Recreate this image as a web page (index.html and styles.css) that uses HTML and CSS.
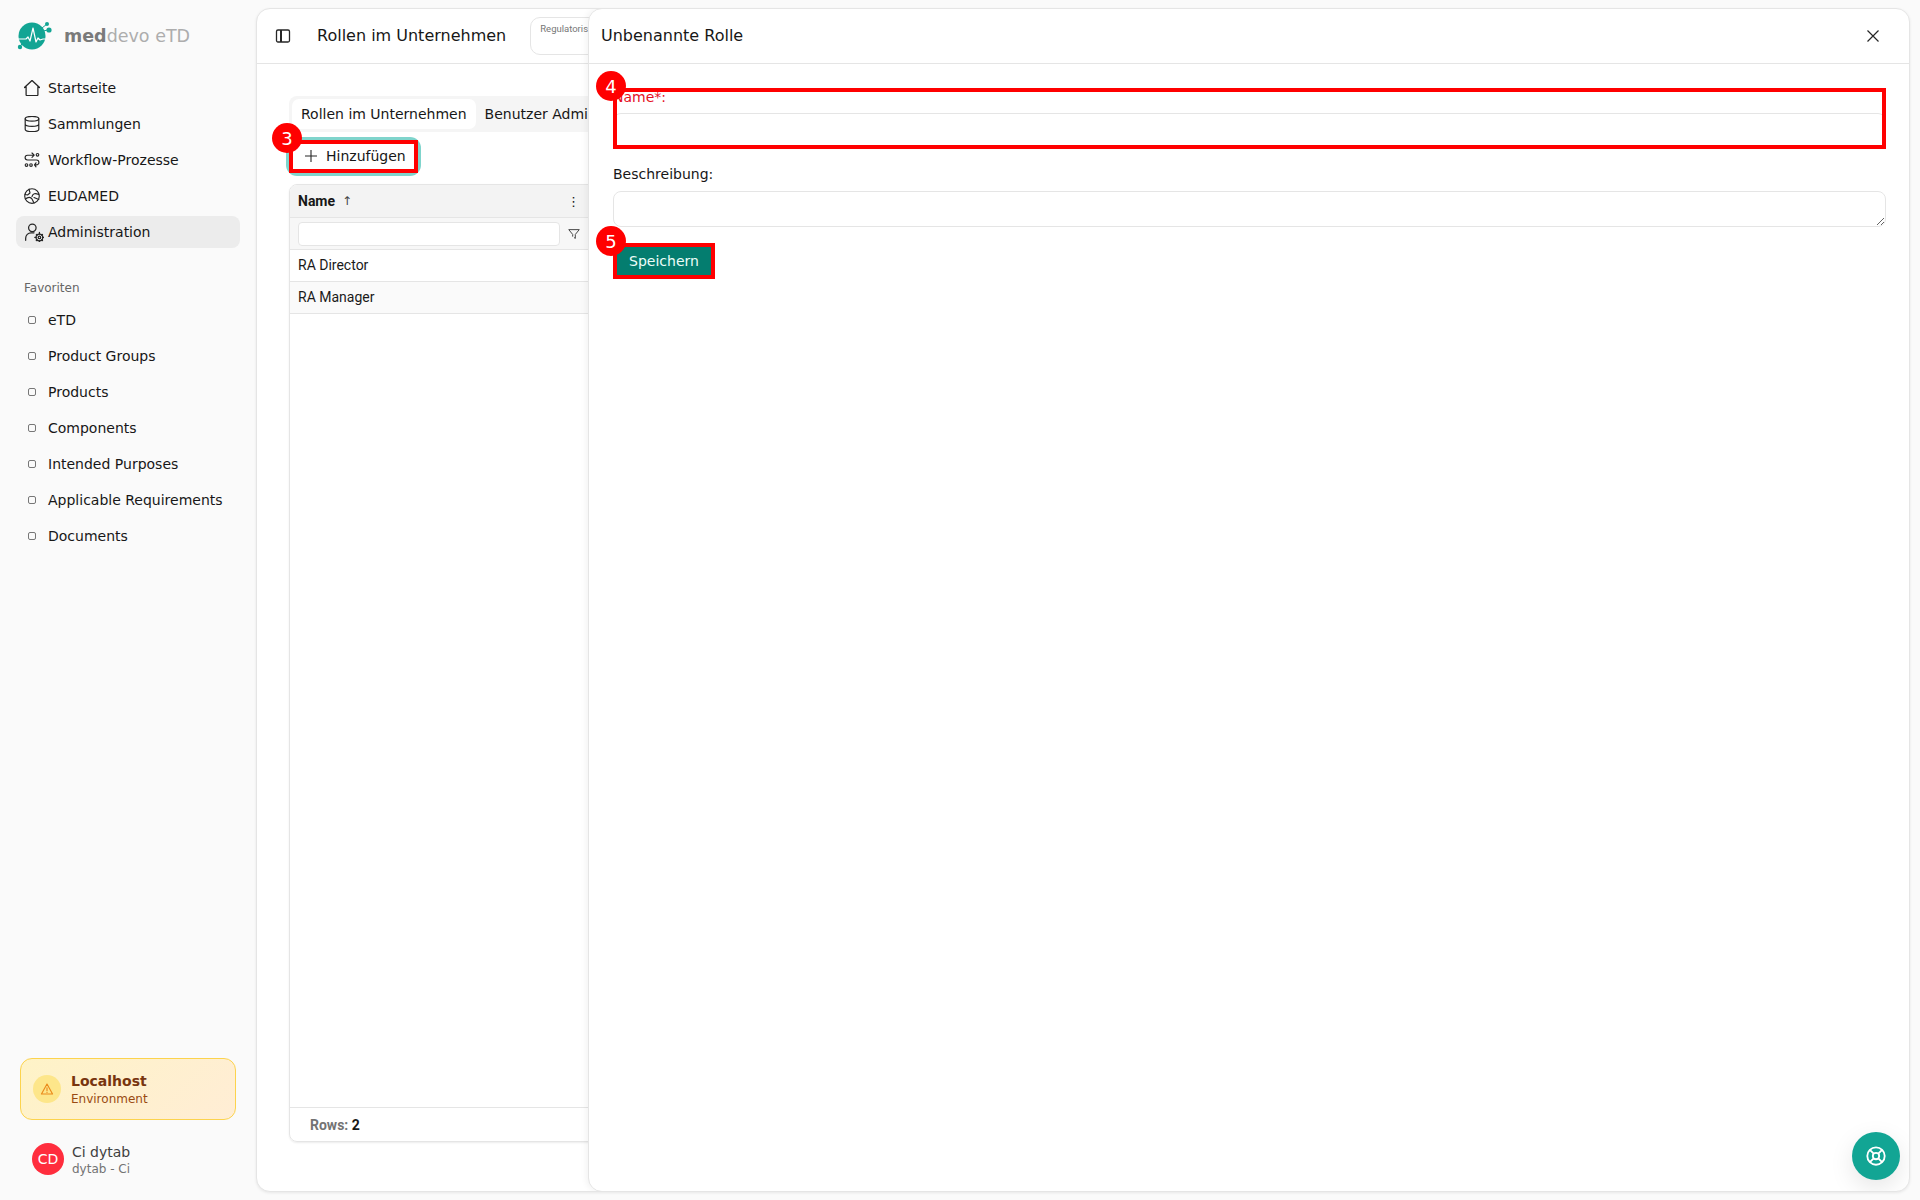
FILE: index.html
```html
<!DOCTYPE html>
<html lang="de">
<head>
    <meta charset="UTF-8">
    <meta name="viewport" content="width=device-width, initial-scale=1.0">
    <title>Rollen im Unternehmen</title>
    <link rel="stylesheet" href="styles.css">
</head>
<body>
    <aside class="sidebar">
        <div class="brand">
            <svg class="brand-logo" viewBox="0 0 36 36" fill="none">
                <circle cx="16" cy="18" r="13.5" fill="#12a594"/>
                <path d="M26 10l5-4M27 13l5-1M6 26l-3 3" stroke="#12a594" stroke-width="1"/>
                <circle cx="31" cy="6" r="2" fill="#12a594"/>
                <circle cx="33" cy="12" r="2.6" fill="#12a594"/>
                <circle cx="4" cy="29" r="2.2" fill="#12a594"/>
                <path d="M1 21h9l2-2 2 4 3-13 3 14 2-4 2 2 3-1h3" stroke="#fff" stroke-width="1.2" stroke-linejoin="round"/>
            </svg>
            <span class="brand-name"><b>med</b>devo eTD</span>
        </div>

        <nav class="nav">
            <a class="nav-item">
                <svg class="nav-icon" viewBox="2.500 2.500 19 19"><path d="M3 11.500 12 3l9 8.500M5 9.500V20a1 1 0 0 0 1 1h12a1 1 0 0 0 1-1V9.500"/></svg>
                Startseite
            </a>
            <a class="nav-item">
                <svg class="nav-icon" viewBox="2 2 20 20"><ellipse cx="12" cy="5.500" rx="8.500" ry="3"/><path d="M3.500 5.500v13c0 1.700 3.800 3 8.500 3s8.500-1.300 8.500-3v-13M3.500 12c0 1.700 3.800 3 8.500 3s8.500-1.300 8.500-3"/></svg>
                Sammlungen
            </a>
            <a class="nav-item">
                <svg class="nav-icon nav-icon-thin" viewBox="0 0 16 16"><circle cx="13.500" cy="2.800" r="1.300"/><path d="M8 1l2.200 2.200L8 5.400M10 3.200H3.500a2.400 2.400 0 0 0 0 4.800h9a2.400 2.400 0 0 1 0 4.800H10.500M12 10.800l-1.500 2 1.500 2"/><circle cx="2.500" cy="13" r="1.300"/><circle cx="7" cy="13" r="1.300"/></svg>
                Workflow-Prozesse
            </a>
            <a class="nav-item">
                <svg class="nav-icon nav-icon-thin" viewBox="0 0 16 16"><circle cx="8" cy="8" r="7.300"/><path d="M5 1.200 6 5 3.500 7 1 6.500M8 8.500C9 5.500 11 5 14.800 6.500M1.500 11C4 8.500 7 9 8 11l2 4M10 9.500l4.800 2"/></svg>
                EUDAMED
            </a>
            <a class="nav-item is-active">
                <svg class="nav-icon nav-icon-wide" viewBox="0 0 24 24"><circle cx="10" cy="7" r="4.500"/><path d="M2 22v-2.500A6.500 6.500 0 0 1 8.500 13H12"/><circle cx="18.500" cy="18.500" r="1.500"/><circle cx="18.500" cy="18.500" r="4"/><path d="M18.500 12.500v2M18.500 22.500v1.500M13 18.500h1.500M22.500 18.500H24M14.800 14.800l1 1M21.200 21.200l1 1M14.800 22.200l1-1M21.200 15.800l1-1"/></svg>
                Administration
            </a>
        </nav>

        <div class="fav-title">Favoriten</div>
        <nav class="nav">
            <a class="nav-item"><i class="fav-dot"></i>eTD</a>
            <a class="nav-item"><i class="fav-dot"></i>Product Groups</a>
            <a class="nav-item"><i class="fav-dot"></i>Products</a>
            <a class="nav-item"><i class="fav-dot"></i>Components</a>
            <a class="nav-item"><i class="fav-dot"></i>Intended Purposes</a>
            <a class="nav-item"><i class="fav-dot"></i>Applicable Requirements</a>
            <a class="nav-item"><i class="fav-dot"></i>Documents</a>
        </nav>

        <div class="env-card">
            <span class="env-icon">
                <svg viewBox="0 0 24 24" fill="none" stroke="#ea8a1a" stroke-width="2" stroke-linejoin="round" stroke-linecap="round"><path d="M12 3.500 2.500 20.500h19zM12 10v5M12 17.800v.2"/></svg>
            </span>
            <div>
                <div class="env-name">Localhost</div>
                <div class="env-sub">Environment</div>
            </div>
        </div>

        <div class="user">
            <span class="avatar">CD</span>
            <div>
                <div class="user-name">Ci dytab</div>
                <div class="user-sub">dytab - Ci</div>
            </div>
        </div>
    </aside>

    <main class="panel">
        <header class="topbar">
            <svg class="toggle-icon" viewBox="0 0 16 16"><rect x="1.500" y="2" width="13" height="12" rx="1.500"/><path d="M6 2v12" stroke-width="2"/></svg>
            <h1 class="page-title">Rollen im Unternehmen</h1>
            <div class="crumb-box">Regulatoris</div>
        </header>

        <div class="content">
            <div class="tabs">
                <button class="tab is-active">Rollen im Unternehmen</button>
                <button class="tab">Benutzer Administration</button>
            </div>

            <div class="toolbar">
                <button class="add-btn">
                    <svg viewBox="0 0 16 16"><path d="M8 2v12M2 8h12"/></svg>
                    Hinzufügen
                    <span class="mark"></span>
                    <span class="mark-num">3</span>
                </button>
            </div>

            <div class="grid">
                <div class="grid-head">
                    <span class="grid-col">Name <span class="sort-arrow">↑</span></span>
                    <span class="kebab">⋮</span>
                </div>
                <div class="grid-filter">
                    <input class="filter-input" type="text">
                    <svg class="filter-icon" viewBox="0 0 16 16"><path d="M2 3h12L9.500 8.500V13L8 12"/><path d="M2 3l4.500 5.500V11"/></svg>
                </div>
                <div class="grid-row">RA Director</div>
                <div class="grid-row is-odd">RA Manager</div>
                <div class="grid-spacer"></div>
                <div class="grid-foot"><span class="rows-label">Rows:</span> <b>2</b></div>
            </div>
        </div>

        <section class="drawer">
            <header class="drawer-head">
                <h2 class="drawer-title">Unbenannte Rolle</h2>
                <svg class="close-icon" viewBox="0 0 16 16"><path d="M2.500 2.500l11 11M13.500 2.500l-11 11"/></svg>
            </header>
            <form class="drawer-body">
                <div class="field field-name">
                    <label class="field-label is-error">Name*:</label>
                    <input class="text-input" type="text">
                    <span class="mark"></span>
                    <span class="mark-num">4</span>
                </div>
                <div class="field">
                    <label class="field-label">Beschreibung:</label>
                    <textarea class="text-area"></textarea>
                </div>
                <button class="save-btn" type="button">
                    Speichern
                    <span class="mark"></span>
                    <span class="mark-num">5</span>
                </button>
            </form>
        </section>

        <button class="help-btn">
            <svg viewBox="0 0 24 24"><circle cx="12" cy="12" r="9.500"/><circle cx="12" cy="12" r="3.500"/><path d="M5.300 5.300l4.200 4.200M14.500 14.500l4.200 4.200M18.700 5.300l-4.200 4.200M9.500 14.500l-4.200 4.200"/></svg>
        </button>
    </main>
</body>
</html>
```

FILE: styles.css
```css
* {
    margin: 0;
    padding: 0;
    box-sizing: border-box;
    font-family: "DejaVu Sans", sans-serif;
}

body {
    display: flex;
    height: 1200px;
    overflow: hidden;
    background-color: #fafafa;
    color: #171717;
    font-size: 14px;
}

/* Sidebar */
.sidebar {
    display: flex;
    flex-direction: column;
    flex: 0 0 256px;
    padding: 18px 16px 24px;
}

.brand {
    display: flex;
    align-items: center;
    gap: 12px;
    height: 36px;
    margin-bottom: 18px;
}

.brand-logo {
    flex: none;
    width: 36px;
    height: 36px;
}

.brand-name {
    color: #adadad;
    font-size: 17.5px;
}

.brand-name b {
    color: #7a7a7a;
}

.nav {
    display: flex;
    flex-direction: column;
    gap: 4px;
}

.nav-item {
    display: flex;
    align-items: center;
    gap: 8px;
    height: 32px;
    padding: 0 8px;
    border-radius: 8px;
}

.nav-item.is-active {
    background-color: #ececec;
}

.nav-icon {
    flex: none;
    width: 16px;
    height: 16px;
    fill: none;
    stroke: #262626;
    stroke-width: 1.500;
    stroke-linecap: round;
    stroke-linejoin: round;
}

.nav-icon-thin {
    stroke-width: 1.150;
}

.nav-icon-wide {
    width: 20px;
    height: 20px;
    margin-right: -4px;
}

.fav-title {
    margin: 31px 0 7px;
    padding-left: 8px;
    color: #666;
    font-size: 12px;
    line-height: 18px;
}

.fav-dot {
    flex: none;
    width: 8px;
    height: 8px;
    margin: 0 4px;
    border: 1.500px solid #777;
    border-radius: 2px;
}

.env-card {
    display: flex;
    align-items: center;
    gap: 10px;
    height: 62px;
    margin: auto 4px 0;
    padding: 0 12px;
    border: 1px solid #fcd34d;
    border-radius: 12px;
    background: linear-gradient(135deg, #fef3c7, #ffedd5);
}

.env-icon {
    display: flex;
    align-items: center;
    justify-content: center;
    flex: none;
    width: 28px;
    height: 28px;
    border-radius: 50%;
    background-color: #fde68a;
}

.env-icon svg {
    width: 14px;
    height: 14px;
}

.env-name {
    color: #78350f;
    font-size: 14px;
    font-weight: bold;
    line-height: 18px;
}

.env-sub {
    height: 16px;
    color: #9a4a12;
    font-size: 12px;
    line-height: 18px;
}

.user {
    display: flex;
    align-items: center;
    gap: 8px;
    margin-top: 22px;
    padding-left: 16px;
}

.avatar {
    display: flex;
    align-items: center;
    justify-content: center;
    flex: none;
    width: 32px;
    height: 32px;
    border-radius: 50%;
    background-color: #ff2d3d;
    color: white;
    font-size: 14px;
}

.user-name {
    height: 18px;
    color: #404040;
    font-size: 14px;
    line-height: 20px;
}

.user-sub {
    height: 16px;
    color: #737373;
    font-size: 12px;
    line-height: 19px;
}

/* Main panel */
.panel {
    position: relative;
    display: flex;
    flex-direction: column;
    flex: none;
    width: 1654px;
    height: 1184px;
    margin-top: 8px;
    overflow: hidden;
    background-color: white;
    border: 1px solid #e5e5e5;
    border-radius: 14px;
    box-shadow: 0 1px 3px rgba(0,0,0,0.08);
}

.topbar {
    display: flex;
    align-items: center;
    flex: none;
    height: 55px;
    padding: 0 0 1px 18px;
    border-bottom: 1px solid #e5e5e5;
}

.toggle-icon {
    flex: none;
    width: 16px;
    height: 16px;
    fill: none;
    stroke: #262626;
    stroke-width: 1.300;
}

.page-title {
    margin-left: 26px;
    font-size: 16px;
    font-weight: normal;
}

.crumb-box {
    align-self: flex-start;
    width: 200px;
    height: 38px;
    margin: 8px 0 0 24px;
    padding: 5px 9px;
    border: 1px solid #e5e5e5;
    border-radius: 10px;
    color: #777;
    font-family: "Roboto", sans-serif;
    font-size: 9.500px;
}

.content {
    display: flex;
    flex-direction: column;
    flex: 1;
    min-height: 0;
    padding: 32px 31px 49px 32px;
}

.tabs {
    display: flex;
    align-items: center;
    flex: none;
    height: 36px;
    padding: 0 3px;
    border-radius: 8px;
    background-color: #f5f5f5;
}

.tab {
    height: 30px;
    padding: 0 9px;
    border: none;
    border-radius: 7px;
    background: none;
    color: #171717;
    font-size: 14px;
}

.tab.is-active {
    background-color: white;
}

.toolbar {
    display: flex;
    flex: none;
    margin: 8px 0 11px;
}

.add-btn {
    position: relative;
    display: flex;
    align-items: center;
    gap: 7px;
    width: 129px;
    height: 33px;
    padding: 0 0 2px 14px;
    border: none;
    border-radius: 8px;
    background-color: white;
    box-shadow: 0 0 0 3px #7fd4cc;
    color: #171717;
    font-size: 14px;
}

.add-btn svg {
    flex: none;
    width: 16px;
    height: 16px;
    fill: none;
    stroke: #262626;
    stroke-width: 1.100;
}

/* Red annotation boxes and numbers */
.mark {
    position: absolute;
    inset: 0;
    border: 4px solid #ff0000;
    pointer-events: none;
}

.mark-num {
    position: absolute;
    top: -17px;
    left: -17px;
    display: flex;
    align-items: center;
    justify-content: center;
    width: 30px;
    height: 30px;
    border-radius: 50%;
    background-color: #ff0000;
    color: white;
    font-size: 18px;
    font-weight: normal;
}

/* Data grid */
.grid {
    display: flex;
    flex-direction: column;
    flex: 1;
    min-height: 0;
    border: 1px solid #e5e5e5;
    border-radius: 8px;
    box-shadow: 0 1px 2px rgba(0,0,0,0.08);
    overflow: hidden;
    font-family: "Roboto", sans-serif;
}

.grid-head {
    display: flex;
    align-items: center;
    justify-content: space-between;
    flex: none;
    height: 33px;
    padding: 0 8px;
    border-bottom: 1px solid #e5e5e5;
    background-color: #f3f3f3;
    font-weight: bold;
}

.grid-col {
    display: flex;
    align-items: center;
    gap: 7px;
    font-family: "Roboto", sans-serif;
}

.sort-arrow {
    font-family: "DejaVu Sans", sans-serif;
    font-size: 12px;
    font-weight: normal;
    color: #444;
}

.kebab {
    margin-right: 1289px;
    font-family: "DejaVu Sans", sans-serif;
    font-size: 13px;
    font-weight: normal;
}

.grid-filter {
    display: flex;
    align-items: center;
    flex: none;
    height: 32px;
    padding: 0 8px;
    border-bottom: 1px solid #e5e5e5;
    background-color: #f7f7f7;
}

.filter-input {
    flex: none;
    width: 262px;
    height: 24px;
    border: 1px solid #e5e5e5;
    border-radius: 4px;
    background-color: white;
}

.filter-icon {
    flex: none;
    width: 14px;
    height: 14px;
    margin-left: 7px;
    fill: none;
    stroke: #404040;
    stroke-width: 1.100;
    stroke-linejoin: round;
}

.grid-row {
    display: flex;
    align-items: center;
    flex: none;
    height: 32px;
    padding: 0 8px 2px;
    border-bottom: 1px solid #e5e5e5;
    color: #1a1a1a;
    font-family: "Roboto", sans-serif;
}

.grid-row.is-odd {
    background-color: #fafafa;
}

.grid-spacer {
    flex: 1;
}

.grid-foot {
    flex: none;
    height: 34px;
    padding: 0 20px;
    border-top: 1px solid #e5e5e5;
    font-family: "Roboto", sans-serif;
    line-height: 35px;
}

.grid-foot b {
    font-family: "Roboto", sans-serif;
}

.rows-label {
    color: #737373;
    font-family: "Roboto", sans-serif;
    font-weight: bold;
}

/* Drawer over the page */
.drawer {
    position: absolute;
    top: -1px;
    right: -1px;
    bottom: -1px;
    display: flex;
    flex-direction: column;
    width: 1322px;
    background-color: white;
    border: 1px solid #e5e5e5;
    border-radius: 14px;
    box-shadow: -2px 0 6px rgba(0,0,0,0.05);
}

.drawer-head {
    display: flex;
    align-items: center;
    justify-content: space-between;
    flex: none;
    height: 55px;
    padding: 0 28px 1px 12px;
    border-bottom: 1px solid #e5e5e5;
}

.drawer-title {
    font-size: 16px;
    font-weight: normal;
}

.close-icon {
    width: 16px;
    height: 16px;
    fill: none;
    stroke: #262626;
    stroke-width: 1.200;
}

.drawer-body {
    display: flex;
    flex-direction: column;
    align-items: flex-start;
    padding: 24px 23px 0 24px;
}

.field {
    position: relative;
    width: 100%;
    margin-bottom: 16px;
}

.field-name {
    margin-bottom: 17px;
}

.field-label {
    display: block;
    height: 17px;
    margin-bottom: 8px;
    font-size: 14px;
    line-height: 17px;
}

.field-label.is-error {
    color: #e5101f;
    line-height: 19px;
}

.text-input,
.text-area {
    display: block;
    width: 100%;
    height: 36px;
    border: 1px solid #e5e5e5;
    border-radius: 8px;
    background-color: white;
}

.text-area {
    resize: vertical;
}

.save-btn {
    position: relative;
    width: 102px;
    height: 36px;
    border: none;
    background-color: #047d6f;
    color: #ecfdf9;
    font-size: 14px;
}

.help-btn {
    position: absolute;
    right: 9px;
    bottom: 11px;
    display: flex;
    align-items: center;
    justify-content: center;
    width: 48px;
    height: 48px;
    border: none;
    border-radius: 50%;
    background-color: #12a594;
    box-shadow: 0 8px 24px rgba(0,0,0,0.1);
}

.help-btn svg {
    width: 22px;
    height: 22px;
    fill: none;
    stroke: white;
    stroke-width: 2;
}
```
